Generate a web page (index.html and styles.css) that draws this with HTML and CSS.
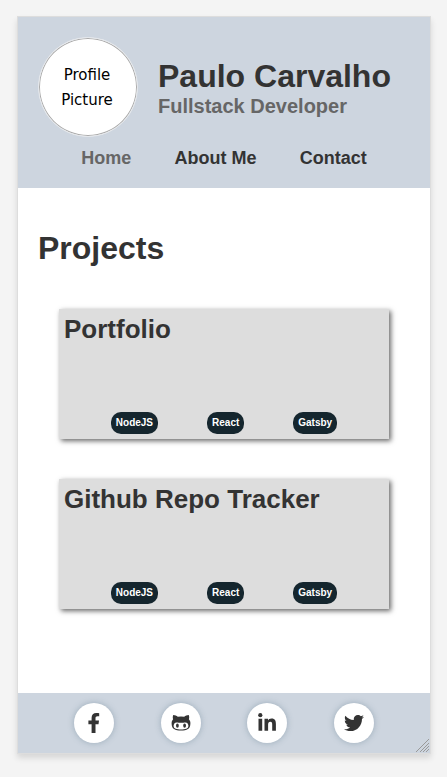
FILE: index.html
```html
<!DOCTYPE html>
<html lang="en">
<head>
<meta charset="utf-8">
<meta name="viewport" content="width=device-width, initial-scale=1">
<title>Paulo Carvalho</title>
<link rel="stylesheet" href="styles.css">
</head>
<body>
<div class="page">
  <header class="header">
    <div class="profile">
      <div class="avatar"><span>Profile</span><span>Picture</span></div>
      <div class="intro">
        <h1 class="name">Paulo Carvalho</h1>
        <p class="role">Fullstack Developer</p>
      </div>
    </div>
    <nav class="nav">
      <a class="nav-link active" href="#">Home</a>
      <a class="nav-link" href="#about">About Me</a>
      <a class="nav-link" href="#contact">Contact</a>
    </nav>
  </header>
  <main class="main">
    <h2 class="heading">Projects</h2>
    <div class="projects">
      <article class="card">
        <h3 class="card-title">Portfolio</h3>
        <ul class="tags"><li class="tag">NodeJS</li><li class="tag">React</li><li class="tag">Gatsby</li></ul>
      </article>
      <article class="card">
        <h3 class="card-title">Github Repo Tracker</h3>
        <ul class="tags"><li class="tag">NodeJS</li><li class="tag">React</li><li class="tag">Gatsby</li></ul>
      </article>
    </div>
  </main>
  <footer class="footer">
    <a class="social" href="#" aria-label="Facebook">
      <svg width="20" height="20" viewBox="0 0 20 20"><path d="M7.600 20v-8.800H4.400V7.600h3.200V4.800C7.600 1.700 9.400 0 12.300 0c1.500 0 2.900.2 2.900.2v3.100h-1.600c-1.600 0-2.100.9-2.100 1.900v2.400h3.500l-.5 3.600h-3V20z"/></svg>
    </a>
    <a class="social" href="#" aria-label="GitHub">
      <svg width="20" height="20" viewBox="0 0 20 20"><path fill-rule="evenodd" d="M2.300 2c1.700 0 3.200.8 4.500 1.700a17 17 0 0 1 6.400 0C14.500 2.800 16 2 17.700 2c.7 1.500.6 3 .2 4.200 1 1.200 1.500 2.300 1.500 4 0 5.900-3.500 7.300-9.400 7.300S.6 16.100.6 10.200c0-1.700.5-2.800 1.500-4C1.700 5 1.600 3.500 2.300 2zM10 16.500c4.300 0 7.400-.6 7.400-3.700 0-1.700-1-3.400-3-3.400-1.500 0-2.600.3-4.400.3s-2.900-.3-4.400-.3c-2 0-3 1.700-3 3.400 0 3.100 3.100 3.700 7.400 3.700z"/><ellipse cx="6.400" cy="12.700" rx="1.400" ry="2.100"/><ellipse cx="13.600" cy="12.700" rx="1.400" ry="2.100"/></svg>
    </a>
    <a class="social" href="#" aria-label="LinkedIn">
      <svg width="20" height="20" viewBox="0 0 20 20"><circle cx="3.300" cy="2.200" r="2.100"/><path d="M1.500 5.800h3.700v11.900H1.500zM7.500 5.800H11v1.600c.5-.9 1.700-1.900 3.500-1.900 3.700 0 4.400 2.400 4.400 5.600v6.600h-3.700v-5.800c0-1.400 0-3.200-1.900-3.200s-2.200 1.500-2.200 3.100v5.900H7.500z"/></svg>
    </a>
    <a class="social" href="#" aria-label="Twitter">
      <svg width="20" height="20" viewBox="0 0 512 512"><path d="M459.370 151.716c.325 4.548.325 9.097.325 13.645 0 138.720-105.583 298.558-298.558 298.558-59.452 0-114.680-17.219-161.137-47.106 8.447.974 16.568 1.299 25.340 1.299 49.055 0 94.213-16.568 130.274-44.832-46.132-.975-84.792-31.188-98.112-72.772 6.498.974 12.995 1.624 19.818 1.624 9.421 0 18.843-1.300 27.614-3.573-48.081-9.747-84.143-51.980-84.143-102.985v-1.299c13.969 7.797 30.214 12.670 47.431 13.319-28.264-18.843-46.781-51.005-46.781-87.391 0-19.492 5.197-37.360 14.294-52.954 51.655 63.675 129.300 105.258 216.365 109.807-1.624-7.797-2.599-15.918-2.599-24.040 0-57.828 46.782-104.934 104.934-104.934 30.213 0 57.502 12.670 76.670 33.137 23.715-4.548 46.456-13.320 66.599-25.340-7.798 24.366-24.366 44.833-46.132 57.827 21.117-2.273 41.584-8.122 60.426-16.243-14.292 20.791-32.161 39.308-52.628 54.253z"/></svg>
    </a>
    <svg class="grip" width="14" height="14" viewBox="0 0 14 14" aria-hidden="true"><path d="M0 13 13 0M4 13l9-9M7 13l6-6M10 13l3-3"/></svg>
  </footer>
</div>
</body>
</html>
```
FILE: styles.css
```css
* {
  box-sizing: border-box;
  margin: 0;
  padding: 0;
}

body {
  padding: 16px 16px 23px 17px;
  background: #f4f4f4;
  color: #333;
  font-family: "Liberation Sans", Arial, sans-serif;
}

.page {
  display: flex;
  flex-direction: column;
  min-height: calc(100vh - 39px);
  border: 1px solid #ddd;
  background: #fff;
  box-shadow: 0 4px 6px rgba(0, 0, 0, 0.12);
}

.header {
  padding: 20px 20px 19px;
  background: #cdd5df;
}

.profile {
  display: flex;
  align-items: center;
  gap: 20px;
}

.avatar {
  display: flex;
  flex: none;
  flex-direction: column;
  align-items: center;
  justify-content: center;
  width: 100px;
  height: 100px;
  padding: 2px 2px 0 0;
  border: 1px solid #e4e7eb;
  border-radius: 50%;
  background: #fff;
  box-shadow: inset 0 0 0 1px #aaa;
  color: #000;
  font: 15px/25px "DejaVu Sans", sans-serif;
}

.intro {
  padding-top: 2px;
}

.name {
  font-size: 32px;
  line-height: 36px;
}

.role {
  color: #666;
  font-size: 20px;
  font-weight: bold;
  line-height: 24px;
}

.nav {
  display: flex;
  justify-content: space-evenly;
  margin-top: 11px;
}

.nav-link {
  color: #333;
  font-size: 18px;
  font-weight: bold;
  line-height: 21px;
  text-decoration: none;
}

.active {
  color: #666;
}

.main {
  flex: 1;
  padding: 40px 20px;
}

.heading {
  font-size: 32px;
  line-height: 40px;
}

.projects {
  display: grid;
  gap: 40px;
  padding: 41px 21px 0;
}

.card {
  display: flex;
  flex-direction: column;
  justify-content: space-between;
  min-height: 130px;
  padding: 5px 0;
  background: #ddd;
  box-shadow: 2px 2px 5px rgba(0, 0, 0, 0.6);
}

.card-title {
  padding: 0 5px;
  font-size: 26px;
  line-height: 30px;
}

.tags {
  display: flex;
  justify-content: center;
  gap: 49px;
  list-style: none;
}

.tag {
  padding: 5px;
  border-radius: 10px;
  background: #15262e;
  color: #fff;
  font-size: 10px;
  font-weight: bold;
  line-height: 12px;
}

.footer {
  position: relative;
  display: flex;
  justify-content: space-evenly;
  padding: 10px;
  background: #cdd5df;
}

.social {
  display: flex;
  align-items: center;
  justify-content: center;
  width: 40px;
  height: 40px;
  border-radius: 50%;
  background: #fff;
  box-shadow: 0 0 6px rgba(80, 110, 130, 0.4);
  fill: #333;
}

.grip {
  position: absolute;
  right: 0;
  bottom: 0;
  fill: none;
  stroke: #999;
}
```
